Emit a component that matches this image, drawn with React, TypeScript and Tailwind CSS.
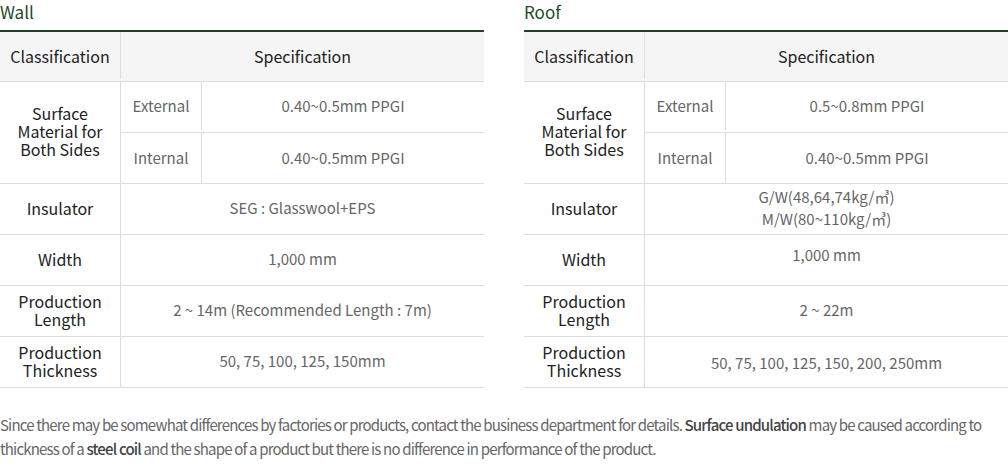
import React from "react";

const FONT = { fontFamily: '"Noto Sans CJK KR", "Noto Sans", sans-serif' };

function Row({ label, children, valueClass = "pb-[2px]" }: { label: React.ReactNode; children: React.ReactNode; valueClass?: string }) {
  return (
    <div className="flex h-[51px] border-b border-[#dddddd]">
      <div className="w-[120px] shrink-0 flex items-center justify-center text-center text-[16px] leading-[18px] text-[#222] pb-[3px]">
        {label}
      </div>
      <div className={`flex-1 border-l border-[#dddddd] flex items-center justify-center text-center text-[15px] leading-[22px] text-[#666] ${valueClass}`}>
        {children}
      </div>
    </div>
  );
}

function SpecTable({
  title,
  ext,
  int,
  insulator,
  length,
  thickness,
  widthClass = "pb-[2px]",
  thickClass = "pb-[2px]",
}: {
  title: string;
  ext: string;
  int: string;
  insulator: React.ReactNode;
  length: string;
  thickness: string;
  widthClass?: string;
  thickClass?: string;
}) {
  return (
    <div className="w-[484px]">
      <div className="h-[30px] text-[17px] leading-[24px] text-[#1e4a2a]">{title}</div>
      <div className="border-t-2 border-[#1d4324]">
        <div className="flex h-[50px] border-b border-[#dddddd] bg-[#f5f5f5] text-[16px] text-[#222] pb-[2px]">
          <div className="w-[120px] shrink-0 flex items-center justify-center">Classification</div>
          <div className="flex-1 border-l border-[#dddddd] flex items-center justify-center">Specification</div>
        </div>
        <div className="flex h-[102px] border-b border-[#dddddd]">
          <div className="w-[120px] shrink-0 flex items-center justify-center text-center text-[16px] leading-[18px] text-[#222] pb-[4px]">
            Surface
            <br />
            Material for
            <br />
            Both Sides
          </div>
          <div className="flex-1 border-l border-[#dddddd] flex flex-col">
            <div className="flex h-[51px] border-b border-[#dddddd] pb-[2px]">
              <div className="w-[80px] shrink-0 flex items-center justify-center text-[15px] text-[#666]">External</div>
              <div className="flex-1 border-l border-[#dddddd] flex items-center justify-center text-[15px] text-[#666]">{ext}</div>
            </div>
            <div className="flex h-[50px]">
              <div className="w-[80px] shrink-0 flex items-center justify-center text-[15px] text-[#666]">Internal</div>
              <div className="flex-1 border-l border-[#dddddd] flex items-center justify-center text-[15px] text-[#666]">{int}</div>
            </div>
          </div>
        </div>
        <Row label="Insulator">{insulator}</Row>
        <Row label="Width" valueClass={widthClass}>1,000 mm</Row>
        <Row label={<>Production<br />Length</>}>{length}</Row>
        <Row label={<>Production<br />Thickness</>} valueClass={thickClass}>{thickness}</Row>
      </div>
    </div>
  );
}

export default function App() {
  return (
    <div className="w-[1008px] h-[467px] bg-white overflow-hidden" style={FONT}>
      <div className="flex justify-between">
        <SpecTable
          title="Wall"
          ext="0.40~0.5mm PPGI"
          int="0.40~0.5mm PPGI"
          insulator="SEG : Glasswool+EPS"
          length="2 ~ 14m (Recommended Length : 7m)"
          thickness="50, 75, 100, 125, 150mm"
        />
        <SpecTable
          title="Roof"
          ext="0.5~0.8mm PPGI"
          int="0.40~0.5mm PPGI"
          insulator={
            <span className="text-[15px] leading-[22px]">
              G/W(48,64,74kg/㎥)
              <br />
              M/W(80~110kg/㎥)
            </span>
          }
          length="2 ~ 22m"
          thickness="50, 75, 100, 125, 150, 200, 250mm"
          widthClass="pb-[10px]"
          thickClass="pt-[2px]"
        />
      </div>
      <p className="mt-[25px] text-[15px] leading-[24px] tracking-[-0.055em] text-[#666]">
        Since there may be somewhat differences by factories or products, contact the business department for details.{" "}
        <span className="font-medium text-[#444]">Surface undulation</span> may be caused according to thickness of a{" "}
        <span className="font-medium text-[#444]">steel coil</span> and the shape of a product but there is no difference in performance of the product.
      </p>
    </div>
  );
}
